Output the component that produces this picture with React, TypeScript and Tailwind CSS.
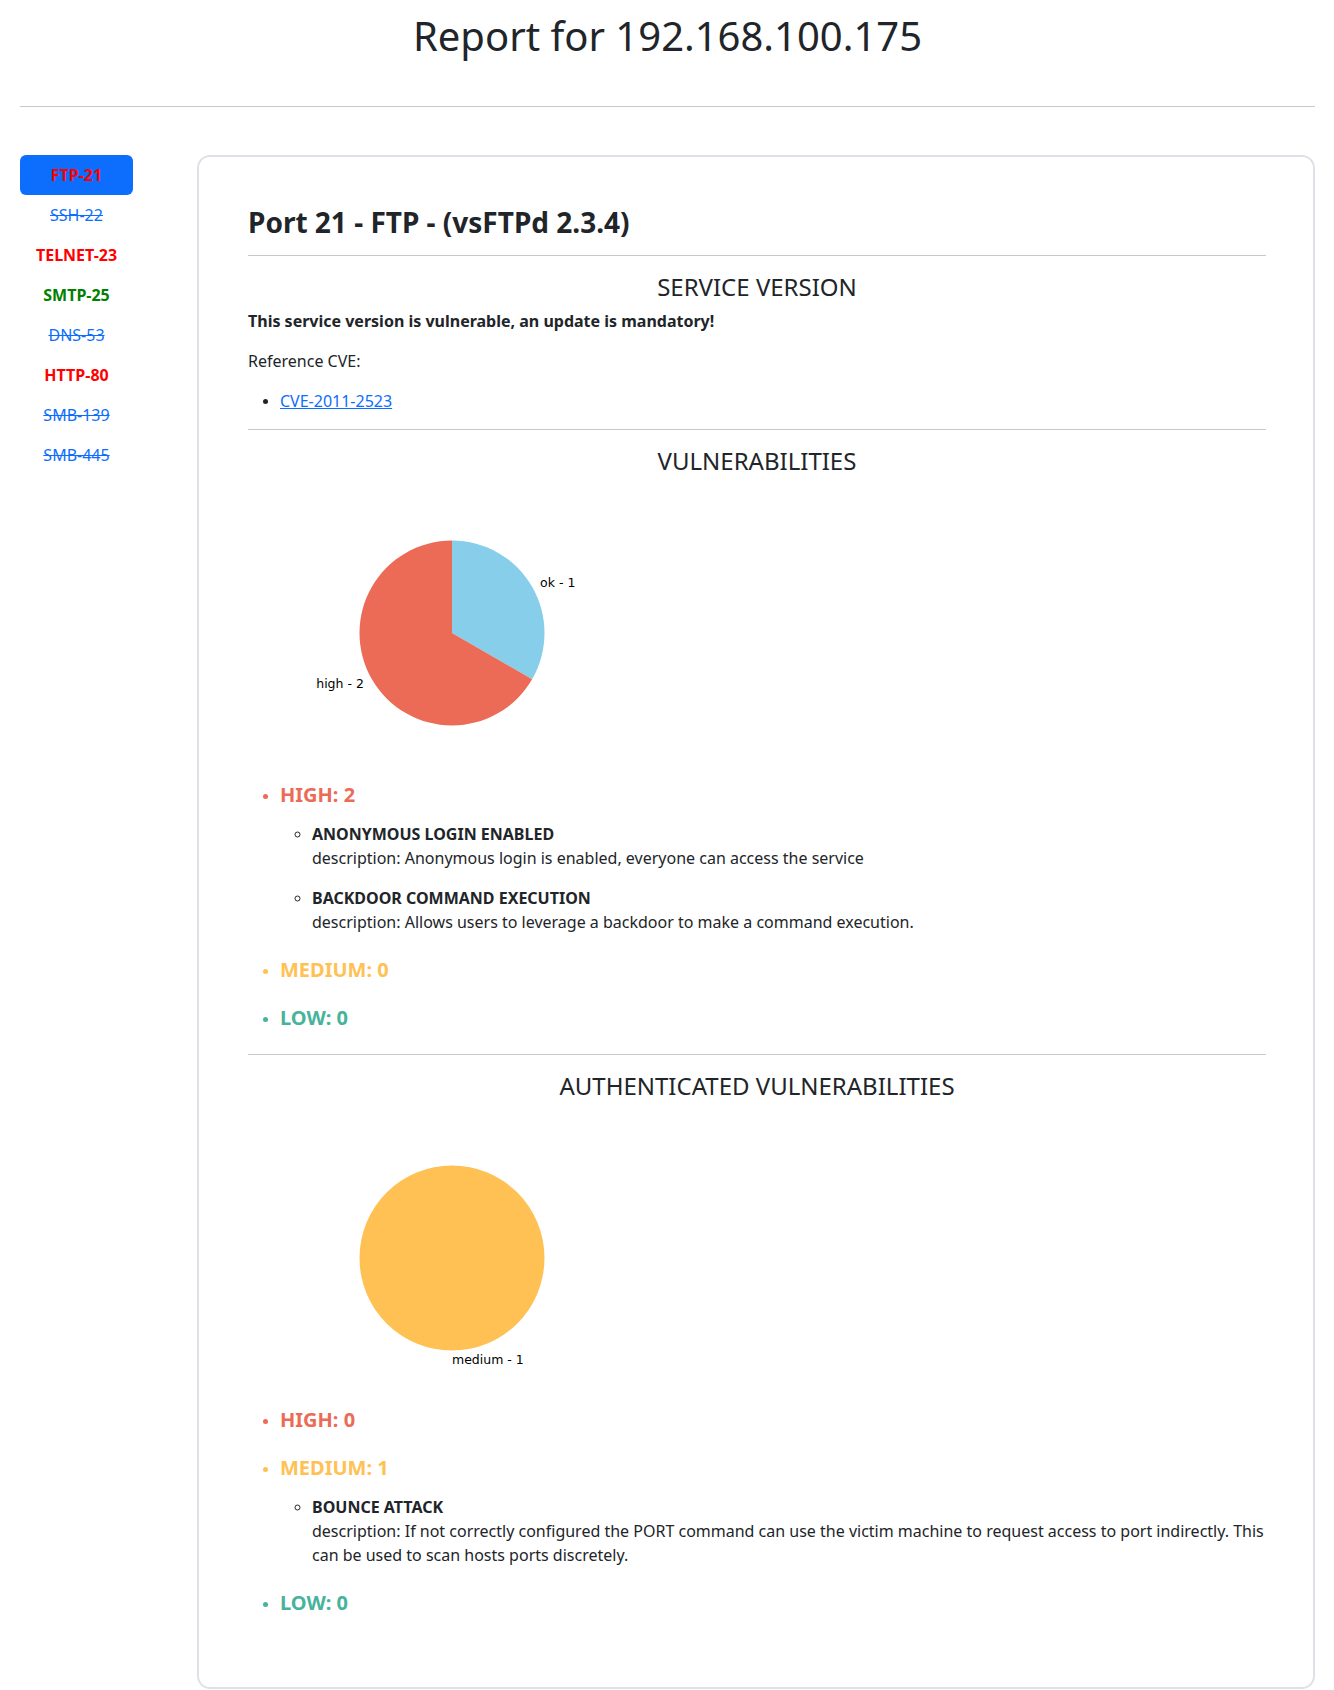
import React from "react";

type Vuln = { title: string; description: string };
type Level = { label: string; color: string; items: Vuln[] };
type Slice = { label: string; value: number; color: string };

const ports = [
  { name: "FTP-21", kind: "active" },
  { name: "SSH-22", kind: "closed" },
  { name: "TELNET-23", kind: "red" },
  { name: "SMTP-25", kind: "green" },
  { name: "DNS-53", kind: "closed" },
  { name: "HTTP-80", kind: "red" },
  { name: "SMB-139", kind: "closed" },
  { name: "SMB-445", kind: "closed" },
];

const vulns: Level[] = [
  {
    label: "HIGH: 2",
    color: "text-[#ec6b56]",
    items: [
      {
        title: "ANONYMOUS LOGIN ENABLED",
        description: "Anonymous login is enabled, everyone can access the service",
      },
      {
        title: "BACKDOOR COMMAND EXECUTION",
        description: "Allows users to leverage a backdoor to make a command execution.",
      },
    ],
  },
  { label: "MEDIUM: 0", color: "text-[#ffc154]", items: [] },
  { label: "LOW: 0", color: "text-[#47b39c]", items: [] },
];

const authVulns: Level[] = [
  { label: "HIGH: 0", color: "text-[#ec6b56]", items: [] },
  {
    label: "MEDIUM: 1",
    color: "text-[#ffc154]",
    items: [
      {
        title: "BOUNCE ATTACK",
        description:
          "If not correctly configured the PORT command can use the victim machine to request access to port indirectly. This can be used to scan hosts ports discretely.",
      },
    ],
  },
  { label: "LOW: 0", color: "text-[#47b39c]", items: [] },
];

function PieChart({ slices }: { slices: Slice[] }) {
  const cx = 204;
  const cy = 150;
  const r = 92.5;
  const total = slices.reduce((s, x) => s + x.value, 0);
  // clockwise from 12 o'clock, like the matplotlib output
  let start = 90;
  return (
    <svg width="400" height="300" viewBox="0 0 400 300" className="block">
      {slices.map((s) => {
        const sweep = (s.value / total) * 360;
        const end = start - sweep;
        const mid = ((start + end) / 2) * (Math.PI / 180);
        const a0 = start * (Math.PI / 180);
        const a1 = end * (Math.PI / 180);
        const lx = cx + Math.cos(mid) * r * 1.1;
        const ly = cy - Math.sin(mid) * r * 1.1;
        const anchor = Math.cos(mid) >= -1e-9 ? "start" : "end";
        start = end;
        const shape =
          sweep >= 359.99 ? (
            <circle cx={cx} cy={cy} r={r} fill={s.color} />
          ) : (
            <path
              d={`M${cx},${cy} L${cx + Math.cos(a0) * r},${cy - Math.sin(a0) * r} A${r},${r} 0 ${
                sweep > 180 ? 1 : 0
              } 1 ${cx + Math.cos(a1) * r},${cy - Math.sin(a1) * r} Z`}
              fill={s.color}
            />
          );
        return (
          <g key={s.label}>
            {shape}
            <text
              x={lx}
              y={ly}
              textAnchor={anchor}
              dominantBaseline="central"
              fontFamily="'DejaVu Sans', sans-serif"
              fontSize="12.5"
              fill="#000"
            >
              {s.label}
            </text>
          </g>
        );
      })}
    </svg>
  );
}

function LevelList({ levels }: { levels: Level[] }) {
  return (
    <ul className="list-disc pl-8 marker:text-[14px]">
      {levels.map((lv, i) => {
        const last = i === levels.length - 1;
        const empty = lv.items.length === 0;
        return (
          <li key={lv.label} className={`${lv.color} pb-2`}>
            <h5 className={`text-xl leading-6 font-bold ${last && empty ? "" : "mb-2"}`}>{lv.label}</h5>
            {!empty ? (
              <ul className="list-[circle] pl-8 pt-[7px] text-[#212529] marker:text-[13px]">
                {lv.items.map((v) => (
                  <li key={v.title} className="pb-4">
                    <div className="font-bold">{v.title}</div>
                    <div>description: {v.description}</div>
                  </li>
                ))}
              </ul>
            ) : (
              !last && <div className="h-2" />
            )}
          </li>
        );
      })}
    </ul>
  );
}

function SectionTitle({ children }: { children: React.ReactNode }) {
  return <h4 className="text-2xl leading-[29px] text-center mb-2">{children}</h4>;
}

function Rule() {
  return <hr className="border-t border-[#c8c9ca] my-4" />;
}

export default function App() {
  return (
    <div className="min-h-[1690px] bg-white text-[#212529] font-['Noto_Sans',sans-serif] text-base leading-6 pl-5 pr-[19px] pt-3">
      <h1 className="text-[40px] leading-[48px] text-center">Report for 192.168.100.175</h1>
      <hr className="border-t border-[#c8c9ca] mt-[46px]" />

      <div className="flex mt-[48px]">
        <nav className="w-[113px] flex flex-col shrink-0">
          {ports.map((p) => {
            if (p.kind === "active")
              return (
                <a key={p.name} className="h-10 flex items-center justify-center rounded-md bg-[#0d6efd] text-[#ff0000] font-bold">
                  {p.name}
                </a>
              );
            if (p.kind === "closed")
              return (
                <a key={p.name} className="h-10 flex items-center justify-center text-[#0d6efd] line-through">
                  {p.name}
                </a>
              );
            return (
              <a
                key={p.name}
                className={`h-10 flex items-center justify-center font-bold ${
                  p.kind === "red" ? "text-[#ff0000]" : "text-[#008000]"
                }`}
              >
                {p.name}
              </a>
            );
          })}
        </nav>

        <div className="ml-[64px] flex-1 border-2 border-[#dee2e6] rounded-[13px] pl-[49px] pr-[47px] pt-[48px] pb-[64px]">
          <h3 className="text-[28px] leading-[34px] font-bold mb-4">Port 21 - FTP - (vsFTPd 2.3.4)</h3>
          <Rule />
          <SectionTitle>SERVICE VERSION</SectionTitle>
          <p className="font-bold mb-4">This service version is vulnerable, an update is mandatory!</p>
          <p className="mb-4">Reference CVE:</p>
          <ul className="list-disc pl-8 mb-4 marker:text-[14px]">
            <li>
              <a className="text-[#0d6efd] underline">CVE-2011-2523</a>
            </li>
          </ul>
          <Rule />
          <SectionTitle>VULNERABILITIES</SectionTitle>
          <PieChart
            slices={[
              { label: "ok - 1", value: 1, color: "#87ceeb" },
              { label: "high - 2", value: 2, color: "#ec6b56" },
            ]}
          />
          <LevelList levels={vulns} />
          <Rule />
          <SectionTitle>AUTHENTICATED VULNERABILITIES</SectionTitle>
          <PieChart slices={[{ label: "medium - 1", value: 1, color: "#ffc154" }]} />
          <LevelList levels={authVulns} />
        </div>
      </div>
    </div>
  );
}
